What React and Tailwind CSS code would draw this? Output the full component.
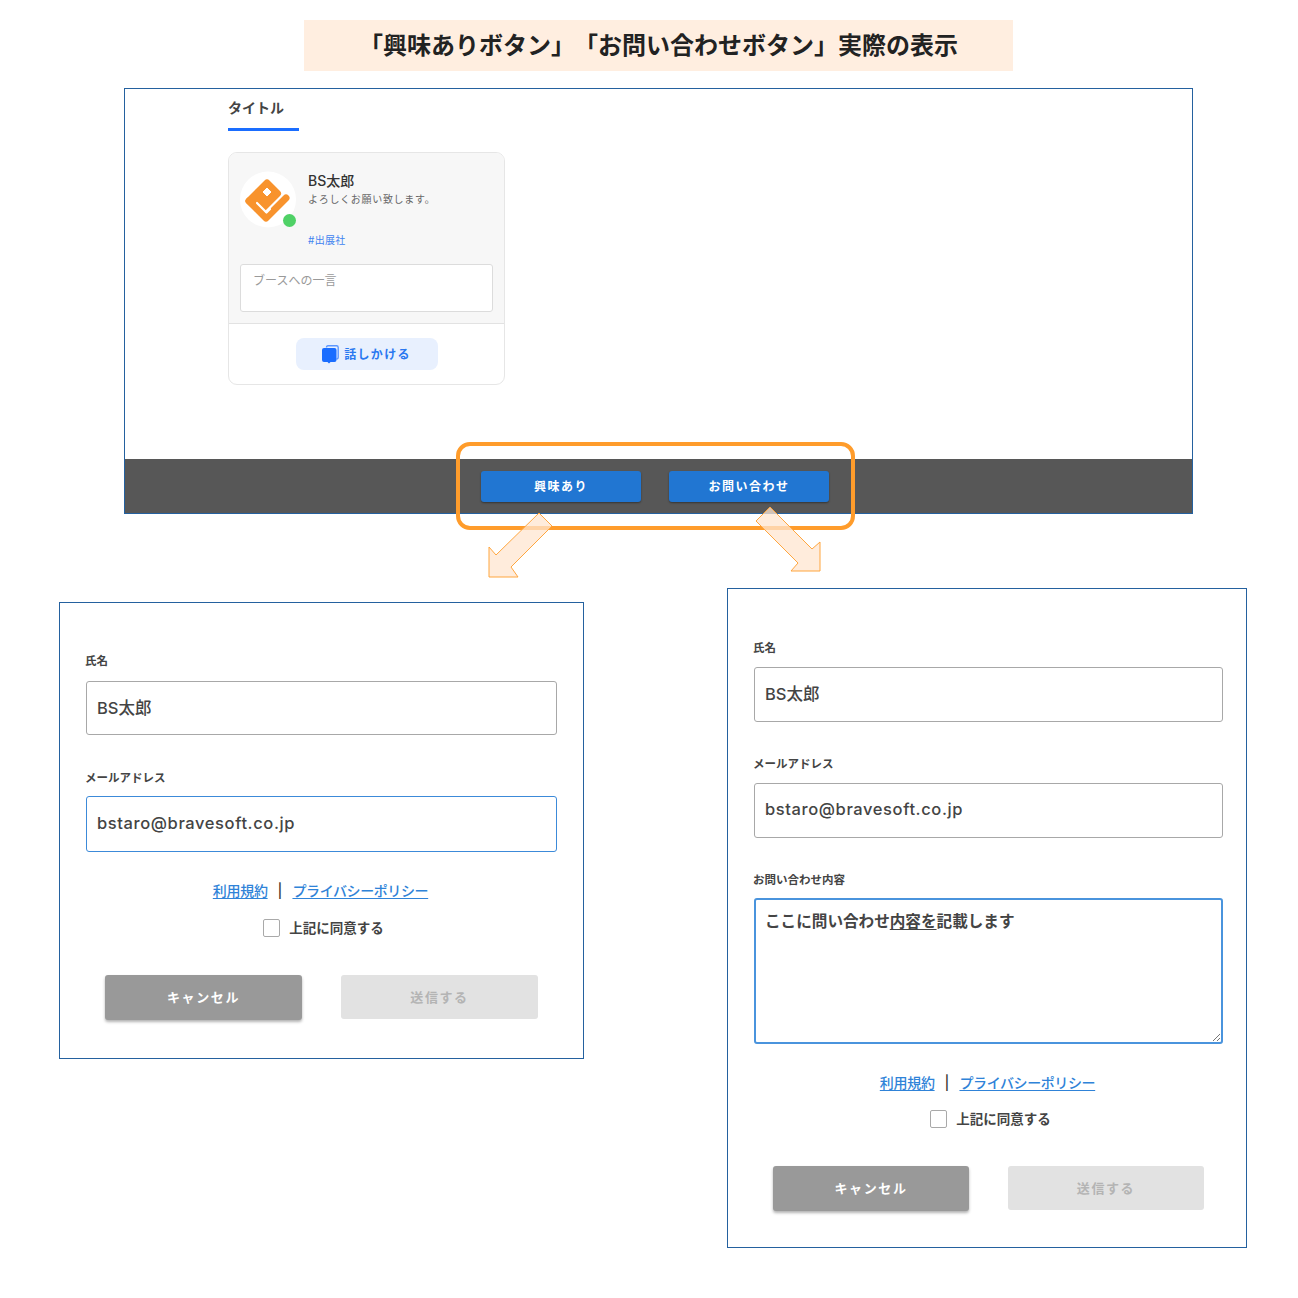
import React from "react";

const FONT = "font-['Inter','Noto_Sans_CJK_JP',sans-serif]";

function Field({ label, value, focused, labelGap = "mb-[9px]", bottom = "mb-[32px]", height = "h-[55px]", spacing = "" }) {
    return (
        <div className={bottom}>
            <div className={`-ml-px h-5 leading-5 text-[11.5px] font-semibold text-[#444] ${labelGap}`}>{label}</div>
            <input
                readOnly
                value={value}
                className={`block w-full ${height} px-[10px] pb-[3px] rounded-[3px] bg-white text-[16.5px] font-medium text-[#444] outline-none border ${spacing} ${focused ? "border-[#3c8ad9]" : "border-[#a8a8a8]"}`}
            />
        </div>
    );
}

function Agreement({ checkGap }) {
    return (
        <div className="flex flex-col items-center">
            <div className="flex items-center h-5 pr-[2px] text-sm font-medium text-[#2f83d8]">
                <a className="underline underline-offset-2 tracking-[-0.3px]">利用規約</a>
                <span className="mx-[10px] text-[#333] text-sm">|</span>
                <a className="underline underline-offset-2 tracking-[-0.4px]">プライバシーポリシー</a>
            </div>
            <div className={`flex items-center h-5 ml-[4px] ${checkGap}`}>
                <span className="w-[17px] h-[18px] rounded-[2px] border border-[#a9a9a9] bg-white"></span>
                <span className="ml-[9px] text-[13.5px] font-semibold text-[#444]">上記に同意する</span>
            </div>
        </div>
    );
}

function FormButtons() {
    return (
        <div className="flex items-start gap-[39px] px-[19px] mt-[37px]">
            <button className="flex-1 h-[45px] rounded-[3px] bg-[#999999] text-white text-[13px] font-semibold tracking-[1.6px] shadow-[0_2px_3px_rgba(0,0,0,0.3)]">
                キャンセル
            </button>
            <button className="flex-1 h-[44px] pt-px rounded-[3px] bg-[#e2e2e2] text-[#b4b4b4] text-[13px] font-semibold tracking-[1.6px]">
                送信する
            </button>
        </div>
    );
}

function Logo() {
    return (
        <svg width="56" height="57" viewBox="0 0 56 57" className="shrink-0">
            <circle cx="28" cy="28.5" r="28" fill="#fff" />
            <path d="M9 30 L27 12 L37.5 22.5 L20 40 Z" fill="#f8932d" stroke="#f8932d" strokeWidth="7" strokeLinejoin="round" />
            <path d="M46 27 L26 47 L9 30" fill="none" stroke="#f8932d" strokeWidth="7" strokeLinecap="round" strokeLinejoin="round" />
            <path d="M17 32 L26.5 41.5 L30 38" fill="none" stroke="#fff" strokeWidth="2.2" strokeLinecap="round" strokeLinejoin="round" />
            <path d="M27 17 L31 21 L27 25 L23 21 Z" fill="#fff" stroke="#fff" strokeWidth="1" strokeLinejoin="round" />
        </svg>
    );
}

function ChatIcon() {
    return (
        <svg width="17" height="19" viewBox="0 0 17 19" className="shrink-0">
            <path d="M4.5 2.5 Q4.5 0.8 6 0.8 H14.5 Q16.2 0.8 16.2 2.5 V12 Q16.2 14 14.5 14" fill="none" stroke="#5d97ff" strokeWidth="1.4" />
            <path d="M2 3 H12.5 Q14.5 3 14.5 5 V15 Q14.5 17 12.5 17 H8.5 L7 18.5 L5.5 17 H2 Q0 17 0 15 V5 Q0 3 2 3 Z" fill="#1a6dff" />
        </svg>
    );
}

function Card() {
    return (
        <div className="w-[277px] h-[233px] mt-[21px] rounded-[9px] border border-[#e6e6e6] bg-white overflow-hidden">
            <div className="h-[171px] px-[11px] pt-[18px] bg-[#f7f7f7] border-b border-[#e2e2e2]">
                <div className="flex relative h-[93px]">
                    <Logo />
                    <span className="absolute left-[43px] top-[43px] w-[13px] h-[13px] rounded-full bg-[#4fd166]"></span>
                    <div className="ml-3">
                        <div className="text-sm leading-5 font-medium text-[#333]">BS太郎</div>
                        <div className="text-[10px] leading-4 tracking-[0.7px] text-[#666]">よろしくお願い致します。</div>
                        <div className="mt-[25px] text-[10px] leading-4 tracking-[0.3px] text-[#3f83f0]">#出展社</div>
                    </div>
                </div>
                <div className="w-[253px] h-[48px] px-3 py-2 rounded-[3px] border border-[#dcdcdc] bg-white text-xs leading-4 text-[#9a9a9a]">
                    ブースへの一言
                </div>
            </div>
            <div className="flex justify-center pt-[14px]">
                <button className="flex items-center justify-center gap-[5px] w-[142px] h-8 pt-px rounded-lg bg-[#e8f0fe] text-xs font-bold tracking-[1.3px] text-[#2a78f0]">
                    <ChatIcon />
                    話しかける
                </button>
            </div>
        </div>
    );
}

function BarButton({ children }) {
    return (
        <button className="w-[160px] h-[31px] pt-px rounded-[3px] bg-[#2176d2] text-white text-xs font-semibold tracking-[1.5px] shadow-[0_1px_2px_rgba(0,0,0,0.4)]">
            {children}
        </button>
    );
}

export default function App() {
    return (
        <div className={`relative w-[1298px] h-[1298px] bg-white overflow-hidden ${FONT}`}>
            {/* heading */}
            <div className="pt-5">
                <div className="flex items-center justify-center w-[709px] h-[51px] ml-[304px] bg-[#ffeee0] text-2xl font-bold text-[#222]">
                    <span>「興味ありボタン」</span>
                    <span className="-ml-px">「お問い合わせボタン」実際の表示</span>
                </div>
            </div>

            {/* page preview */}
            <div className="flex flex-col w-[1069px] h-[426px] ml-[124px] mt-[17px] border border-[#24619f]">
                <div className="pl-[103px]">
                    <div className="w-[71px] h-[42px] pt-[9px] border-b-[3px] border-[#1a6dff] text-sm leading-5 font-bold text-[#444]">タイトル</div>
                    <Card />
                </div>
                <div className="flex items-center gap-[28px] h-[54px] mt-auto pl-[356px] bg-[#575757]">
                    <BarButton>興味あり</BarButton>
                    <BarButton>お問い合わせ</BarButton>
                </div>
            </div>

            {/* forms */}
            <div className="flex items-start mt-[74px] ml-[59px]">
                <div className="w-[525px] h-[457px] mt-[14px] pl-[26px] pr-[26px] pt-[48px] border border-[#24619f]">
                    <Field label="氏名" value="BS太郎" labelGap="mb-[10px]" height="h-[54px]" bottom="mb-[33px]" />
                    <Field label="メールアドレス" value="bstaro@bravesoft.co.jp" focused labelGap="mb-[8px]" height="h-[56px]" bottom="mb-[29px]" spacing="tracking-[0.6px]" />
                    <Agreement checkGap="mt-[17px]" />
                    <FormButtons />
                </div>
                <div className="w-[520px] h-[660px] ml-[143px] pl-[26px] pr-[23px] pt-[49px] border border-[#24619f]">
                    <Field label="氏名" value="BS太郎" />
                    <Field label="メールアドレス" value="bstaro@bravesoft.co.jp" spacing="tracking-[0.6px]" />
                    <div className="-ml-px h-5 leading-5 mb-[8px] text-[11.5px] font-semibold text-[#444]">お問い合わせ内容</div>
                    <div className="relative h-[146px] px-[9px] py-[10px] rounded-[3px] border-2 border-[#4a94dd] text-[15.6px] font-semibold text-[#444]">
                        ここに問い合わせ<span className="underline underline-offset-2">内容を</span>記載します
                        <svg width="9" height="9" viewBox="0 0 9 9" className="absolute right-0 bottom-0">
                            <path d="M1 8 L8 1 M5 8 L8 5" stroke="#777" strokeWidth="1" />
                        </svg>
                    </div>
                    <div className="mt-[29px]">
                        <Agreement checkGap="mt-[16px]" />
                    </div>
                    <FormButtons />
                </div>
            </div>

            {/* callout */}
            <div className="absolute left-[456px] top-[442px] w-[399px] h-[88px] rounded-[14px] border-4 border-[#ff9c2b]"></div>
            <svg width="1298" height="1298" viewBox="0 0 1298 1298" className="absolute left-0 top-0 pointer-events-none">
                <polygon
                    points="489,547 489,577 518,577 511,567 552,526 539,513 496,555"
                    fill="#ffe6d0"
                    fillOpacity="0.75"
                    stroke="#ffa63f"
                    strokeWidth="1"
                />
                <polygon
                    points="770,507 812,549 820,542 820,571 791,571 798,563 756,521"
                    fill="#ffe6d0"
                    fillOpacity="0.75"
                    stroke="#ffa63f"
                    strokeWidth="1"
                />
            </svg>
        </div>
    );
}
